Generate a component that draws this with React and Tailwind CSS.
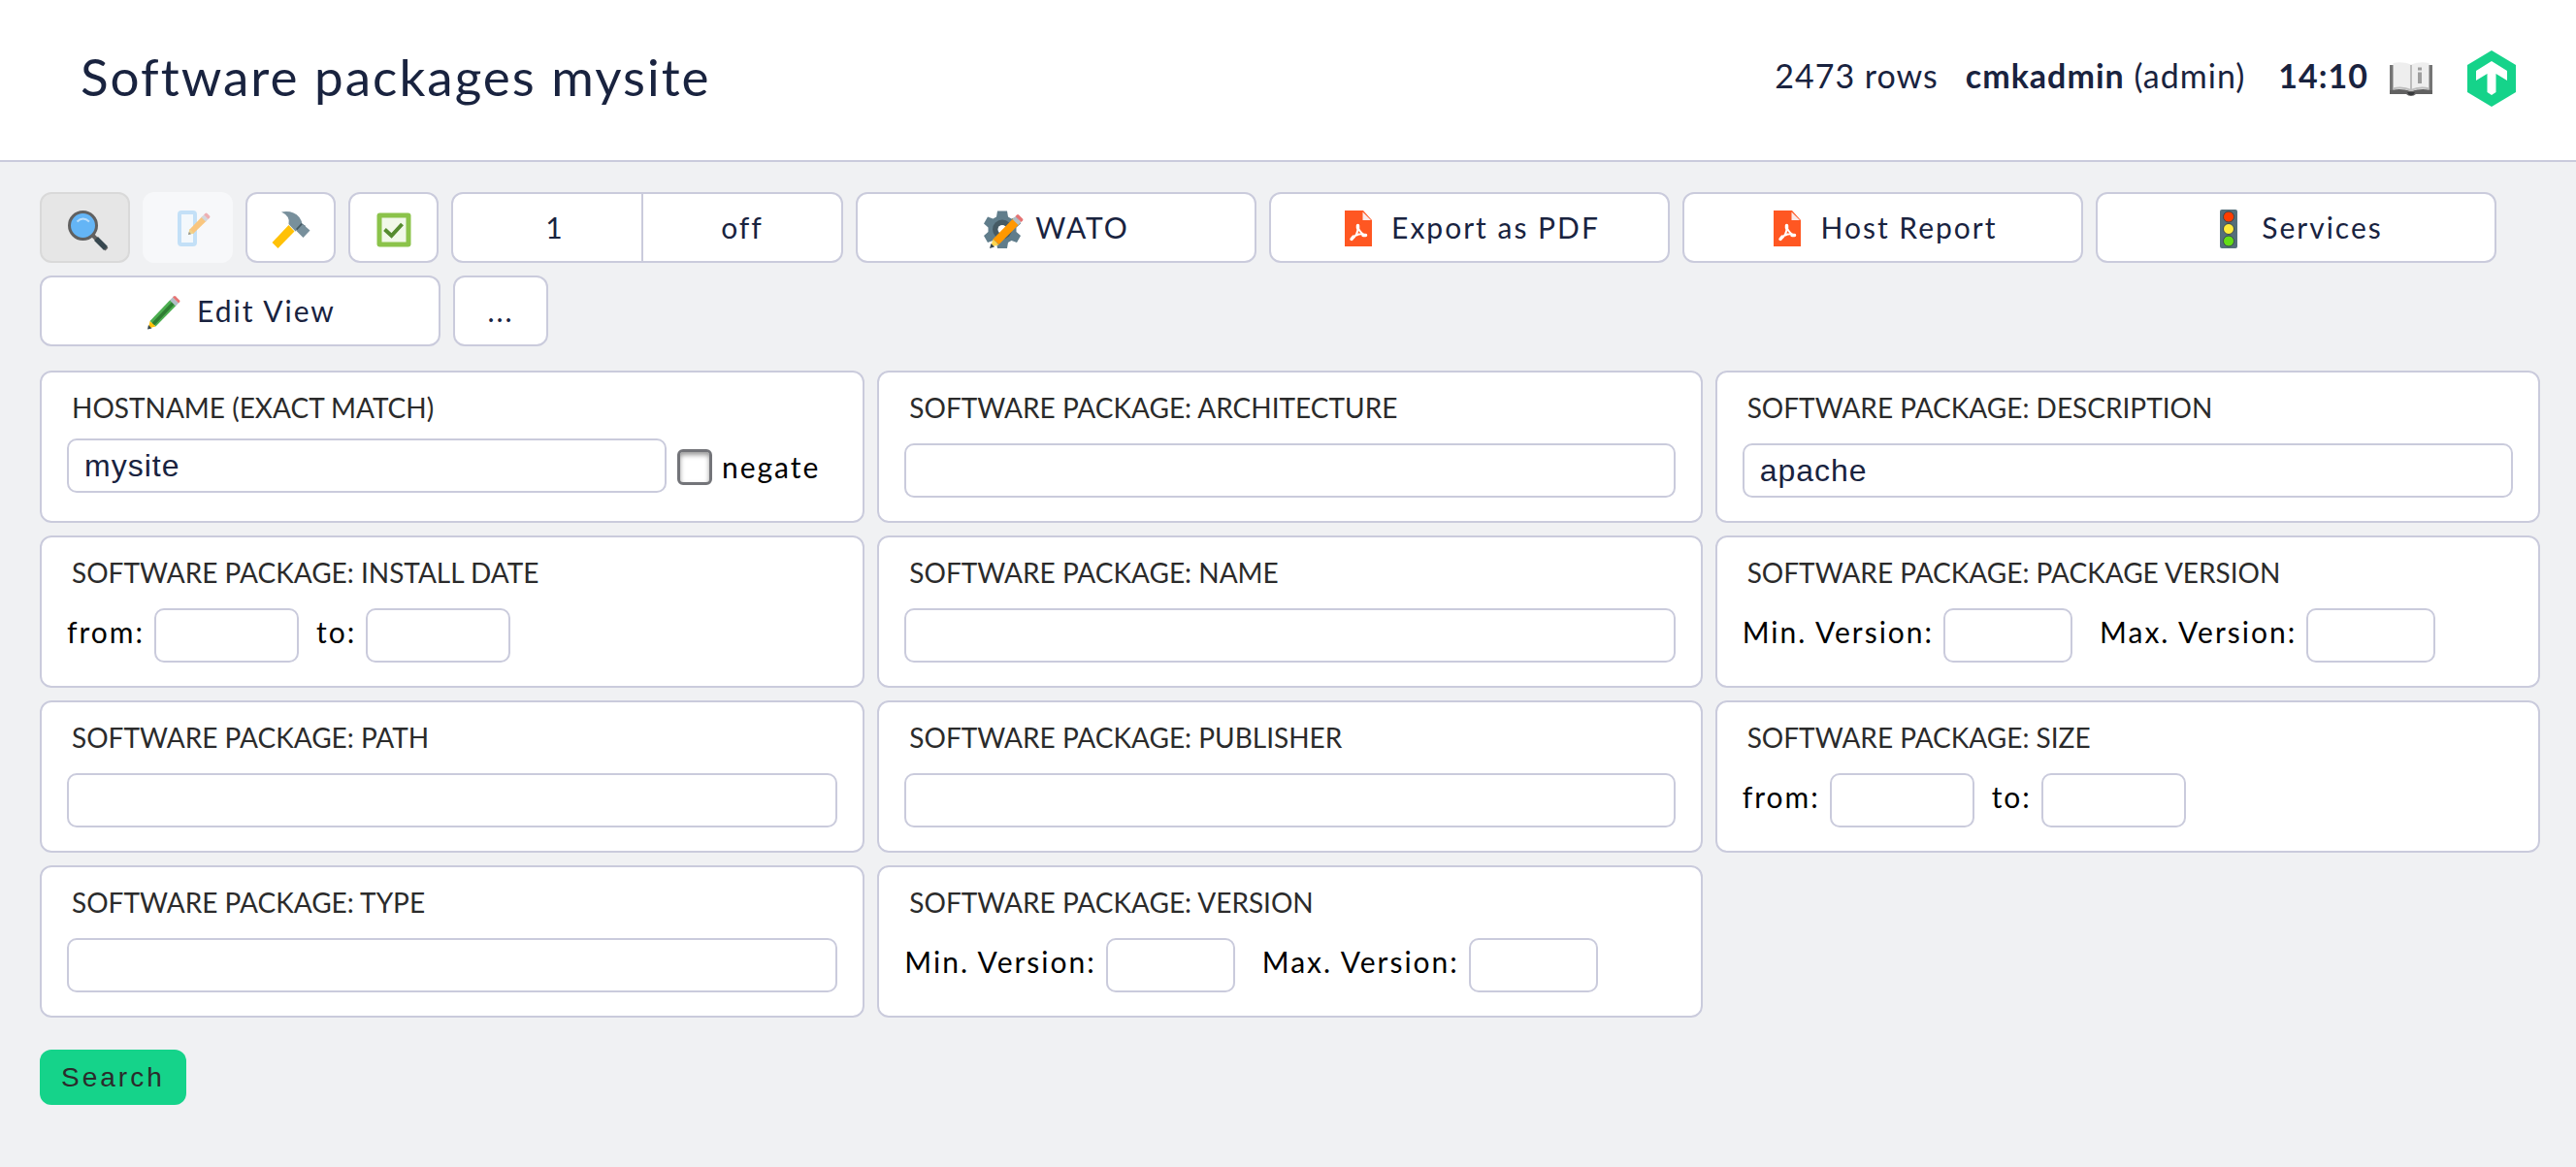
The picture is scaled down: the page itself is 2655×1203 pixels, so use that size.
import { useState } from "react";

const iconClass = "mt-1.5 block h-12 w-12 shrink-0";

function SearchIcon() {
  return (
    <svg viewBox="-1 0 48 48" className={iconClass} aria-hidden="true">
      <path d="M31 29 45 43" stroke="#616161" strokeWidth="4" />
      <path d="M34 32 44 42" stroke="#37474f" strokeWidth="5.500" />
      <circle cx="20.500" cy="18.500" r="14" fill="#64b5f6" stroke="#616161" strokeWidth="3" />
      <path d="M14.500 14.500q6-6 12.500 0" fill="none" stroke="#bbdefb" strokeWidth="2" />
    </svg>
  );
}

function NoteIcon() {
  return (
    <svg viewBox="-8 0 48 48" className={iconClass} aria-hidden="true">
      <rect x="7" y="5" width="16" height="33" rx="2" fill="#f3f8fc" stroke="#c3e0f7" strokeWidth="4" />
      <path d="m17 23 13.500-14 4.500 4.500-14 13.500z" fill="#f9c67f" />
      <path d="m16 28 1.500-6 4.500 4.500z" fill="#f0d48c" />
      <path d="m16 28 .8-3 2.200 2.200z" fill="#8b9297" />
      <path d="m29.500 10 2.500-2.500 4.500 4.500-2.500 2.500z" fill="#d3d7dc" />
      <path d="m32 7.500 1.500-1.500q1-1 2 0l2.500 2.500q1 1 0 2L36.500 12z" fill="#eeb0b3" />
    </svg>
  );
}

function HammerIcon() {
  return (
    <svg viewBox="0 0 48 48" className={iconClass} aria-hidden="true">
      <path d="m4.500 36 17-18 6 6.500-17 17.500z" fill="#ffc107" />
      <path d="M14 4.500q12-2 18.500 5.500 3 4 3.500 9l-7.500 5.500-7-7.500q2-8-7.500-12.500z" fill="#78909c" />
      <path d="m29 22 5.500-6 4.500 3-6 7z" fill="#455a64" />
      <path d="m36 17 7.500 6.500-7 7.500-7-7z" fill="#78909c" />
    </svg>
  );
}

function CheckIcon() {
  return (
    <svg viewBox="0 0 48 48" className={iconClass} aria-hidden="true">
      <rect x="6.500" y="5.500" width="35" height="35" rx="3" fill="#8bc34a" />
      <rect x="11.500" y="10.500" width="25" height="25" fill="#f1f8e9" />
      <path d="m14.500 22.500 7 6.500 11-12" fill="none" stroke="#558b2f" strokeWidth="4" />
    </svg>
  );
}

function GearIcon() {
  return (
    <svg viewBox="-3 0 48 48" className={iconClass} aria-hidden="true">
      <path
        d="M16 3.500h10l1 6 3.500 2 5.500-2 4 7-4.500 4v4.500l4.500 4-4 7-5.500-2-3.500 2-1 6H16l-1-6-3.500-2-5.500 2-4-7 4.500-4V20.500L2 16.500l4-7 5.500 2 3.500-2z"
        fill="#607d8b"
      />
      <circle cx="21" cy="22.500" r="10" fill="#455a64" />
      <circle cx="21" cy="22.500" r="4.500" fill="#fff" />
      <path d="m11.500 32.500 21-21.500 6 6-21 21z" fill="#ff9800" />
      <path d="m9 40.500 2.500-8 6 6z" fill="#ffd54f" />
      <path d="m8 42 1.500-5 3.500 3.500z" fill="#37474f" />
      <path d="m31.500 12 3-3 6 6-3 3z" fill="#b0bec5" />
      <path d="m34.500 9 1.500-1.500q1-1 2 0l4 4q1 1 0 2L40.500 15z" fill="#e57373" />
    </svg>
  );
}

function PdfIcon() {
  return (
    <svg viewBox="0 0 48 48" className={iconClass} aria-hidden="true">
      <path d="M10 3h19l9 10v27H10z" fill="#ff5722" />
      <path d="M28.500 4.500v8.500h8.500z" fill="#fbe9e7" />
      <path
        d="M23.500 19q.500 5-1.500 8.500T17 32.500M22 28.500q4-2 9.500-.500M23.500 20q1.500 5 7 8.500"
        fill="none"
        stroke="#fff"
        strokeWidth="2"
        strokeLinecap="round"
      />
      <path d="M17 32.500 19 30M23.500 18.500v2.500M29 28.500h2.500" stroke="#fff" strokeWidth="3.500" strokeLinecap="round" />
    </svg>
  );
}

function TrafficIcon() {
  return (
    <svg viewBox="0 0 48 48" className={iconClass} aria-hidden="true">
      <rect x="15" y="2" width="18" height="40" rx="2" fill="#546e7a" />
      <circle cx="24" cy="9.500" r="5.500" fill="#ff3d00" stroke="#37474f" />
      <circle cx="24" cy="22" r="5.500" fill="#ffeb3b" stroke="#37474f" />
      <circle cx="24" cy="34.500" r="5.500" fill="#64dd17" stroke="#37474f" />
    </svg>
  );
}

function PencilIcon() {
  return (
    <svg viewBox="0 0 48 48" className={iconClass} aria-hidden="true">
      <path d="m9.500 31 21-22 6 6-21 21.500z" fill="#4caf50" />
      <path d="m11.500 33 21-22 2.500 2.500-21 22z" fill="#2e7d32" />
      <path d="m8 38.500 1.500-7.500 6 5.500z" fill="#ffc107" />
      <path d="m7 39.500 1-4.500 3.500 3.500z" fill="#37474f" />
      <path d="m30 9.500 3-3 6 6-3 3z" fill="#b0bec5" />
      <path d="m33 6.500 1-1q1-1 2 0l4 4q1 1 0 2l-1 1z" fill="#e57373" />
    </svg>
  );
}

function BookIcon() {
  return (
    <svg viewBox="0 0 44 36" className="mt-1.5 block h-9 w-11 shrink-0" aria-hidden="true">
      <path d="M0 3h44v30H27q-2 2-5 2t-5-2H0z" fill="#616161" />
      <path d="M0 3h4v26H0zM40 3h4v26h-4z" fill="#757575" />
      <path d="M3.500 1Q13-1 22 2.500 31-1 40.500 1v27.500Q31 27 22 30 13 27 3.500 28.500z" fill="#eeeeee" />
      <path d="M3.500 27.500Q13 25 22 29 31 25 40.500 27.500" fill="none" stroke="#bdbdbd" strokeWidth="2" />
      <path d="M22 3v27" stroke="#bdbdbd" strokeWidth="2" />
      <path d="M18 31h8l-2 3h-4z" fill="#37393b" />
      <path d="M29 5.500h4v3h-4zM29 10.500h4V22h-4z" fill="#9e9e9e" />
    </svg>
  );
}

function BrandIcon() {
  return (
    <svg viewBox="0 0 50 58" className="block h-[58px] w-[50px] shrink-0" aria-hidden="true">
      <path d="M25 0 50 15v28L25 58 0 43V15z" fill="#15d38a" />
      <path d="M25 11 41 21v10l-11.500-7v19L25 46l-4.500-3V24L9 31V21z" fill="#fff" />
    </svg>
  );
}

const outline = "border-2 border-[#cacbdc] bg-white";

function IconButton({ label, children }) {
  return (
    <button type="button" aria-label={label} className={`flex h-[73px] w-[93px] items-center justify-center rounded-xl ${outline}`}>
      {children}
    </button>
  );
}

function ContextButton({ label, children }) {
  return (
    <button type="button" className={`flex h-[73px] w-[413px] items-center justify-center gap-2.5 rounded-xl pr-1 text-[30px] ${outline}`}>
      {children}
      <span>{label}</span>
    </button>
  );
}

const inputClass =
  'h-14 rounded-[10px] border-2 border-[#cacbdc] bg-white px-4 font-["Liberation_Sans",sans-serif] text-[32px] tracking-[1px] text-[#19233f] outline-none';

function Card({ title, children }) {
  return (
    <fieldset className={`min-w-0 rounded-xl px-[26px] pt-[18px] pb-6 ${outline}`}>
      <legend className="float-left w-full px-[5px] text-[28px] leading-9 tracking-normal text-[#2b2b2b] uppercase">{title}</legend>
      <div className="clear-both flow-root">{children}</div>
    </fieldset>
  );
}

function TextFilter({ title, value = "" }) {
  return (
    <Card title={title}>
      <input type="text" aria-label={title} defaultValue={value} className={`mt-[19px] block w-full ${inputClass}`} />
    </Card>
  );
}

function HostFilter() {
  const [negate, setNegate] = useState(false);
  return (
    <Card title="Hostname (exact match)">
      <div className="mt-[14px] mb-[5px] flex items-center pr-[18px]">
        <input type="text" aria-label="Hostname" defaultValue="mysite" className={`min-w-0 flex-1 ${inputClass}`} />
        <label className="flex items-center gap-[10px] pt-0.5 pl-[11px] text-[30px] leading-9 text-black">
          <input
            type="checkbox"
            checked={negate}
            onChange={(e) => setNegate(e.target.checked)}
            className="h-[37px] w-9 appearance-none rounded-md border-[3px] border-[#737479] bg-white shadow-[inset_0_3px_5px_#999999] checked:bg-[#15d38a]"
          />
          negate
        </label>
      </div>
    </Card>
  );
}

function RangeFilter({ title, from = "from:", to = "to:", version = false }) {
  const width = version ? "w-[133px]" : "w-[149px]";
  return (
    <Card title={title}>
      <div className={`mt-[19px] flex items-center text-[30px] leading-9 text-black ${version ? "gap-7" : "gap-[18px]"}`}>
        {[from, to].map((text) => (
          <label key={text} className="flex items-center gap-[10px]">
            <span className="pb-2">{text}</span>
            <input type="text" className={`${width} ${inputClass}`} />
          </label>
        ))}
      </div>
    </Card>
  );
}

function VersionFilter({ title }) {
  return <RangeFilter title={title} from="Min. Version:" to="Max. Version:" version />;
}

export default function App() {
  return (
    <div className='min-h-screen bg-[#f0f1f3] font-["Lato",sans-serif] tracking-[2px] text-[#19233f]'>
      <header className="flex items-center justify-between border-b-2 border-[#cacbdc] bg-white pt-[46px] pr-[62px] pb-[53px] pl-[83px]">
        <h1 className="text-[53px] leading-[66px]">Software packages mysite</h1>
        <div className="flex items-center text-[34px] leading-[42px] tracking-[1px]">
          <span className="pb-0.5">2473 rows</span>
          <span className="ml-7 pb-0.5">
            <b>cmkadmin</b> (admin)
          </span>
          <b className="mr-[22px] ml-[34px] pb-0.5">14:10</b>
          <a href="#help" aria-label="Help">
            <BookIcon />
          </a>
          <a href="#home" aria-label="Home" className="mt-1 ml-9">
            <BrandIcon />
          </a>
        </div>
      </header>
      <main className="pt-[31px] pr-[37px] pb-12 pl-[41px]">
        <nav className="flex flex-wrap gap-[13px]">
          <button
            type="button"
            aria-label="Filter"
            className="flex h-[73px] w-[93px] items-center justify-center rounded-xl border-2 border-[#d9d9d9] bg-[#e6e6e6]"
          >
            <SearchIcon />
          </button>
          <button type="button" disabled aria-label="Annotate" className="flex h-[73px] w-[93px] items-center justify-center rounded-xl bg-[#f7f8fa]">
            <NoteIcon />
          </button>
          <IconButton label="Commands">
            <HammerIcon />
          </IconButton>
          <IconButton label="Checkboxes">
            <CheckIcon />
          </IconButton>
          <div className={`flex h-[73px] w-[404px] rounded-xl text-[30px] ${outline}`}>
            <button type="button" className="w-[196px] border-r-2 border-[#cacbdc] pl-4">
              1
            </button>
            <button type="button" className="flex-1">
              off
            </button>
          </div>
          <ContextButton label="WATO">
            <GearIcon />
          </ContextButton>
          <ContextButton label="Export as PDF">
            <PdfIcon />
          </ContextButton>
          <ContextButton label="Host Report">
            <PdfIcon />
          </ContextButton>
          <ContextButton label="Services">
            <TrafficIcon />
          </ContextButton>
          <ContextButton label="Edit View">
            <PencilIcon />
          </ContextButton>
          <button type="button" className={`h-[73px] w-[98px] rounded-xl text-[30px] ${outline}`}>
            ...
          </button>
        </nav>
        <form onSubmit={(e) => e.preventDefault()}>
          <div className="mt-[25px] grid grid-cols-3 gap-[13px]">
            <HostFilter />
            <TextFilter title="Software Package: Architecture" />
            <TextFilter title="Software Package: Description" value="apache" />
            <RangeFilter title="Software Package: Install Date" />
            <TextFilter title="Software Package: Name" />
            <VersionFilter title="Software Package: Package Version" />
            <TextFilter title="Software Package: Path" />
            <TextFilter title="Software Package: Publisher" />
            <RangeFilter title="Software Package: Size" />
            <TextFilter title="Software Package: Type" />
            <VersionFilter title="Software Package: Version" />
          </div>
          <button
            type="submit"
            className='mt-[33px] h-[57px] rounded-xl bg-[#15d38a] px-[22px] font-["Liberation_Sans",sans-serif] text-[28px] tracking-[3px] text-[#2b2b2b]'
          >
            Search
          </button>
        </form>
      </main>
    </div>
  );
}
